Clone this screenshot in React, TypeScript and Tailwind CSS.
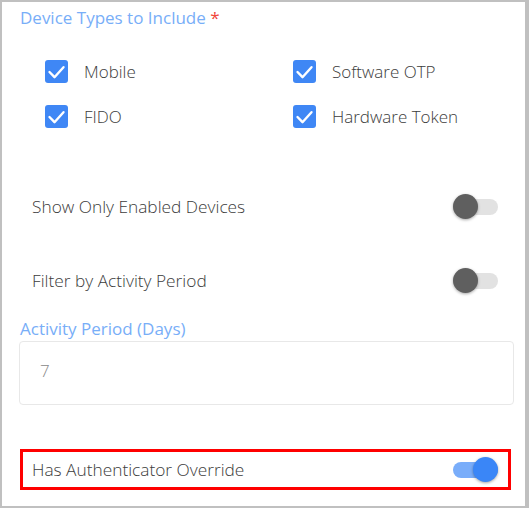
import { useState } from "react";

const font = { fontFamily: '"Open Sans", "Liberation Sans", sans-serif' };

function Check({ label, checked }: { label: string; checked: boolean }) {
  return (
    <div className="flex h-[23px] items-center gap-[16px]">
      <span
        className={
          "flex h-[23px] w-[23px] shrink-0 items-center justify-center rounded-[3px] " +
          (checked ? "bg-[#3f87f5]" : "border border-gray-400 bg-white")
        }
      >
        {checked ? (
          <svg width={23} height={23} viewBox="0 0 23 23" fill="none" stroke="#fff" strokeWidth={2.4} strokeLinecap="round" strokeLinejoin="round">
            <path d="M4.5 12l5 5.2 9-10" />
          </svg>
        ) : null}
      </span>
      <span className="text-[17px] font-light text-[#3c3c3c]">{label}</span>
    </div>
  );
}

function Toggle({ on, onClick }: { on: boolean; onClick: () => void }) {
  return (
    <button type="button" onClick={onClick} className="relative h-[26px] w-[46px] shrink-0">
      <span
        className={
          "absolute left-0 top-[5px] h-[16px] w-[45px] rounded-full " +
          (on ? "bg-[#79adfa]" : "bg-[#e2e2e2]")
        }
      />
      <span
        className={
          "absolute top-0 h-[25px] w-[25px] rounded-full shadow-[0_1px_3px_rgba(0,0,0,0.35)] " +
          (on ? "left-[20px] bg-[#3a86f7]" : "left-0 bg-[#5f5f5f]")
        }
      />
    </button>
  );
}

export default function App() {
  const [enabledOnly, setEnabledOnly] = useState(false);
  const [byActivity, setByActivity] = useState(false);
  const [override, setOverride] = useState(true);

  return (
    <div
      style={font}
      className="h-[508px] w-[529px] border-2 border-r-4 border-[#c0c0c0] bg-white pl-[18px] pt-[4px]"
    >
      <div className="text-[17px] leading-6 text-[#78aef8]">
        Device Types to Include <span className="text-[#f0453a]">*</span>
      </div>

      <div className="mt-[30px] grid grid-cols-[248px_1fr] gap-y-[22px] pl-[25px]">
        <Check label="Mobile" checked />
        <Check label="Software OTP" checked />
        <Check label="FIDO" checked />
        <Check label="Hardware Token" checked />
      </div>

      <div className="mt-[59px] flex h-[40px] w-[491px] items-center justify-between px-3">
        <span className="text-[17.3px] font-light text-[#3c3c3c]">Show Only Enabled Devices</span>
        <Toggle on={enabledOnly} onClick={() => setEnabledOnly((v) => !v)} />
      </div>

      <div className="mt-[34px] flex h-[40px] w-[491px] items-center justify-between px-3">
        <span className="text-[17.3px] font-light text-[#3c3c3c]">Filter by Activity Period</span>
        <Toggle on={byActivity} onClick={() => setByActivity((v) => !v)} />
      </div>

      <div className="mt-[16px] text-[17px] leading-6 text-[#78aef8]">Activity Period (Days)</div>
      <div className="-ml-px flex h-[64px] w-[495px] items-center rounded-[4px] border border-[#e8e8e8] pb-[5px] pl-[20px]">
        <span className="text-[17px] font-light text-[#888]">7</span>
      </div>

      <div className="mt-[44px] flex h-[41px] w-[491px] items-center justify-between border-[3px] border-[#ff0000] pl-[9px] pr-[9px]">
        <span className="text-[17.3px] font-light text-[#3c3c3c]">Has Authenticator Override</span>
        <Toggle on={override} onClick={() => setOverride((v) => !v)} />
      </div>
    </div>
  );
}
